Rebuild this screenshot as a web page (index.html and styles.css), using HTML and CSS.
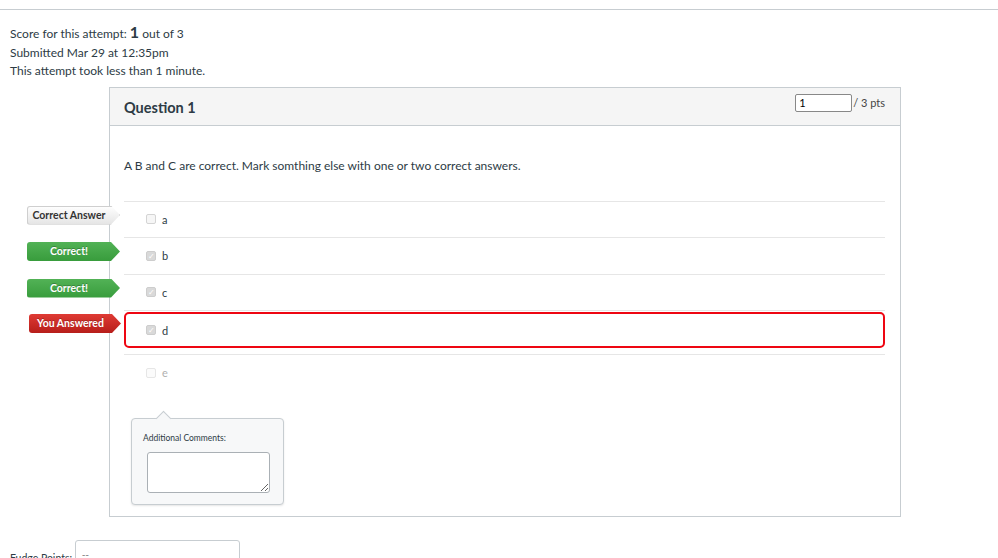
FILE: index.html
```html
<!DOCTYPE html>
<html lang="en">

<head>
    <meta charset="UTF-8">
    <title>Quiz Results</title>
    <link rel="stylesheet" href="styles.css">
</head>

<body>
    <div class="top-rule"></div>

    <!-- Attempt summary -->
    <div class="summary">
        <div>Score for this attempt: <span class="score">1</span> out of 3</div>
        <div>Submitted Mar 29 at 12:35pm</div>
        <div>This attempt took less than 1 minute.</div>
    </div>

    <!-- Question -->
    <div class="question">
        <div class="question-header">
            <span class="question-name">Question 1</span>
            <span class="points"><input class="points-input" type="text" value="1"> / 3 pts</span>
        </div>

        <div class="question-body">
            <div class="question-text">A B and C are correct. Mark somthing else with one or two correct answers.</div>

            <div class="answers">
                <div class="answer">
                    <span class="tag tag-plain">Correct Answer</span>
                    <span class="check"></span>
                    <span class="answer-text">a</span>
                </div>
                <div class="answer">
                    <span class="tag tag-green">Correct!</span>
                    <span class="check checked">&#10003;</span>
                    <span class="answer-text">b</span>
                </div>
                <div class="answer">
                    <span class="tag tag-green">Correct!</span>
                    <span class="check checked">&#10003;</span>
                    <span class="answer-text">c</span>
                </div>
                <div class="answer wrong">
                    <span class="tag tag-red">You Answered</span>
                    <div class="wrong-box">
                        <span class="check checked">&#10003;</span>
                        <span class="answer-text">d</span>
                    </div>
                </div>
                <div class="answer muted">
                    <span class="check"></span>
                    <span class="answer-text">e</span>
                </div>
            </div>

            <!-- Comments popover -->
            <div class="comments">
                <div class="comments-label">Additional Comments:</div>
                <textarea class="comments-box"></textarea>
            </div>
        </div>
    </div>

    <div class="fudge">
        <span class="fudge-label">Fudge Points:</span>
        <input class="fudge-input" type="text" value="--">
    </div>
</body>

</html>
```

FILE: styles.css
```css
/* General styles */
body {
    margin: 0;
    font-family: Lato, "Open Sans", sans-serif;
    color: #2d3b45;
    background: #fff;
}

.top-rule {
    height: 9px;
    border-bottom: 1px solid #c7cdd1;
}

/* Summary */
.summary {
    padding: 13px 10px 0;
    font-size: 12px;
    line-height: 18.5px;
}

.summary .score {
    font-size: 16px;
    font-weight: bold;
}

/* Question box */
.question {
    margin: 6px 0 0 109px;
    width: 790px;
    border: 1px solid #c7cdd1;
}

.question-header {
    display: flex;
    justify-content: space-between;
    align-items: flex-start;
    height: 38px;
    box-sizing: border-box;
    padding: 6px 15px 0 14px;
    background: #f5f5f5;
    border-bottom: 1px solid #c7cdd1;
}

.question-name {
    font-size: 14.5px;
    font-weight: bold;
    margin-top: 5px;
}

.points {
    font-size: 11px;
    color: #444;
    display: flex;
    align-items: center;
}

.points-input {
    width: 57px;
    height: 18px;
    box-sizing: border-box;
    border: 1px solid #888;
    border-radius: 2px;
    padding: 0 3px;
    margin-right: 1px;
    font-family: Lato, sans-serif;
    font-size: 11px;
    color: #000;
}

.question-body {
    padding: 31px 15px 11px 14px;
}

.question-text {
    font-size: 12px;
    line-height: 18px;
    margin-bottom: 26px;
}

/* Answers */
.answer {
    position: relative;
    display: flex;
    align-items: center;
    height: 35.5px;
    border-top: 1px solid #e6e6e6;
    padding-left: 22px;
    font-size: 11px;
}

.answer.wrong {
    height: 43px;
    padding-left: 0;
    align-items: flex-start;
}

.wrong-box {
    display: flex;
    align-items: center;
    width: 100%;
    height: 36px;
    box-sizing: border-box;
    border: 2px solid #ee0612;
    border-radius: 5px;
    padding-left: 20px;
    margin-top: 1px;
}

.answer.muted {
    color: #b0b0b0;
}

.check {
    width: 10px;
    height: 10px;
    box-sizing: border-box;
    border: 1px solid #d4d4d4;
    border-radius: 2px;
    background: #f6f6f6;
    margin-right: 6px;
    font-size: 8px;
    line-height: 8px;
    text-align: center;
    color: #fff;
}

.check.checked {
    background: #d9d9d9;
    border-color: #cdcdcd;
}

.answer.muted .check {
    border-color: #e6e6e6;
    background: #fbfbfb;
}

/* Answer tags */
.tag {
    position: absolute;
    right: calc(100% + 4px);
    top: 4px;
    width: 93px;
    height: 19px;
    box-sizing: border-box;
    padding-right: 9px;
    font-size: 10.5px;
    font-weight: bold;
    line-height: 19px;
    text-align: center;
    border-radius: 3px 0 0 3px;
    clip-path: polygon(0 0, calc(100% - 9px) 0, 100% 50%, calc(100% - 9px) 100%, 0 100%);
}

.tag-plain {
    color: #333;
    background: linear-gradient(#ffffff, #e4e4e4);
    box-shadow: inset 0 0 0 1px #cfcfcf;
}

.tag-green {
    color: #fff;
    background: linear-gradient(#52b256, #389c3c);
    text-shadow: 0 -1px 0 rgba(0, 0, 0, 0.25);
}

.tag-red {
    color: #fff;
    top: 3px;
    right: calc(100% + 3px);
    width: 92px;
    background: linear-gradient(#df3a34, #b71e1a);
    text-shadow: 0 -1px 0 rgba(0, 0, 0, 0.25);
}

/* Comments popover */
.comments {
    position: relative;
    width: 153px;
    box-sizing: border-box;
    margin: 27px 0 0 7px;
    padding: 14px 14px 11px 11px;
    background: #f7f8f9;
    border: 1px solid #c7cdd1;
    border-radius: 4px;
    box-shadow: 0 1px 2px rgba(0, 0, 0, 0.1);
}

.comments::before {
    content: "";
    position: absolute;
    top: -6px;
    left: 26px;
    width: 10px;
    height: 10px;
    background: #f7f8f9;
    border-left: 1px solid #c7cdd1;
    border-top: 1px solid #c7cdd1;
    transform: rotate(45deg);
}

.comments-label {
    font-size: 8.5px;
    margin-bottom: 9px;
}

.comments-box {
    display: block;
    width: 123px;
    height: 41px;
    box-sizing: border-box;
    margin-left: 4px;
    border: 1px solid #aab0b5;
    border-radius: 3px;
    background: #fff;
    resize: both;
}

/* Fudge points */
.fudge {
    display: flex;
    align-items: flex-start;
    margin-top: 23px;
    padding-left: 10px;
}

.fudge-label {
    font-size: 10.5px;
    white-space: nowrap;
    margin-top: 12px;
    margin-right: 3px;
}

.fudge-input {
    width: 165px;
    height: 30px;
    box-sizing: border-box;
    border: 1px solid #c7cdd1;
    border-radius: 3px;
    padding: 0 6px;
    font-size: 10px;
    color: #888;
}
```
